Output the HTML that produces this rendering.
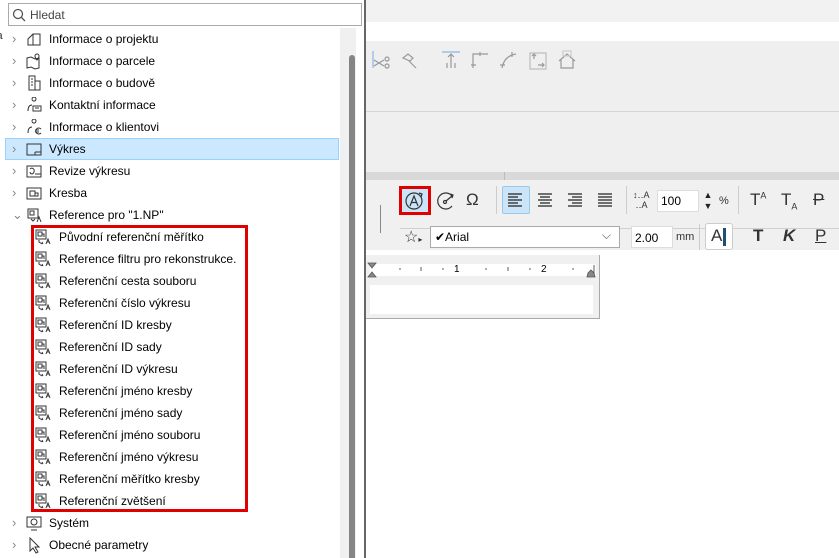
<!DOCTYPE html>
<html><head><meta charset="utf-8"><style>
*{margin:0;padding:0;box-sizing:border-box}
body{width:839px;height:558px;overflow:hidden;position:relative;background:#fff;font-family:"Liberation Sans",sans-serif;font-size:12px;color:#000}
.a{position:absolute}
.row{position:absolute;height:22px;line-height:22px;white-space:nowrap}
.chev{position:absolute;left:12px;top:0;color:#888;font-size:13px}
.ic{position:absolute;width:16px;height:16px;top:3px}
.ic svg{display:block}
.tb{position:absolute;color:#333;font-size:13px}
</style></head><body>
<div class="a" style="left:366px;top:0;width:473px;height:22px;background:#f2f2f2"></div>
<div class="a" style="left:366px;top:41px;width:473px;height:70px;background:#efefef"></div>
<div class="a" style="left:366px;top:111px;width:473px;height:1px;background:#d6d6d6"></div>
<div class="a" style="left:366px;top:112px;width:473px;height:60px;background:#efefef"></div>
<div class="a" style="left:366px;top:172px;width:473px;height:8px;background:#d9d9d9"></div>
<div class="a" style="left:504px;top:172px;width:1px;height:8px;background:#bbb"></div>
<div class="a" style="left:366px;top:180px;width:473px;height:70px;background:#f0f0f0"></div>
<div class="a" style="left:400px;top:228px;width:439px;height:1px;background:#d0d0d0"></div>
<div class="a" style="left:380px;top:205px;width:1px;height:28px;background:#888"></div>
<svg class="a" style="left:372px;top:50px" width="240" height="22" fill="none" stroke="#999" stroke-width="1.2">
<line x1="1" y1="1" x2="1" y2="18" stroke="#8bb4e8"/><path d="M2 10 L12 16 M2 16 L12 10"/><circle cx="15" cy="9" r="2"/><circle cx="15" cy="16" r="2"/>
<path d="M31 8 l5-4 5 4-3 3z M37 11 l7 7"/>
<line x1="70" y1="2" x2="88" y2="2" stroke="#8bb4e8"/><path d="M79 4 v10 M76 7 l3-3 3 3 M75 13v5 M79 14v4 M83 13v5"/>
<path d="M101 18 V4 H116 M108 2v4 M99 15h5"/>
<path d="M130 18 Q132 6 144 4 M140 2v5 M128 15h5"/>
<rect x="158" y="3" width="16" height="16" stroke="#bbb"/><path d="M162 9 v-5 M160 6l2-2 2 2 M166 15h6 M170 13l2 2-2 2"/>
<path d="M187 11 l8-7 8 7 M189 10v8 h12v-8"/><rect x="191" y="1" width="8" height="5" stroke="#ccc"/>
</svg>
<div class="a" style="left:399px;top:186px;width:32px;height:29px;border:3px solid #e00000;background:#cce4f7"></div>
<svg class="a" style="left:404px;top:190px" width="22" height="22" fill="none" stroke="#333" stroke-width="1.2"><circle cx="10" cy="11" r="8"/><path d="M6 16 l4-10 4 10 M7.5 12.5h5"/><path d="M15 3 l3 1 -1 3" /></svg>
<svg class="a" style="left:435px;top:190px" width="22" height="22" fill="none" stroke="#333" stroke-width="1.2"><path d="M17 6 A8 8 0 1 0 17 16"/><circle cx="10" cy="12" r="1.5"/><path d="M11 11 l6-5 M15 4l3 1-1 3"/></svg>
<div class="tb" style="left:466px;top:190px;font-size:17px">Ω</div>
<div class="a" style="left:496px;top:186px;width:1px;height:28px;background:#ccc"></div>
<div class="a" style="left:502px;top:186px;width:28px;height:28px;background:#cce4f7;border:1px solid #99c9ef;border-radius:2px"></div>
<svg class="a" style="left:508px;top:193px" width="110" height="14" stroke="#222" stroke-width="1.2">
<path d="M0 1h14M0 4h10M0 7h14M0 10h10M0 13h14"/>
<path d="M30 1h14M32 4h10M30 7h14M32 10h10M30 13h14"/>
<path d="M60 1h14M64 4h10M60 7h14M64 10h10M60 13h14"/>
<path d="M90 1h14M90 4h14M90 7h14M90 10h14M90 13h14"/>
</svg>
<div class="a" style="left:626px;top:186px;width:1px;height:28px;background:#ccc"></div>
<div class="tb" style="left:633px;top:190px;font-size:9px;line-height:10px">↕‥A<br>&nbsp;‥A</div>
<div class="a" style="left:657px;top:190px;width:42px;height:22px;background:#fff;border:1px solid #ddd;padding:3px 3px;font-size:12px">100</div>
<div class="a" style="left:701px;top:190px;width:14px;height:22px;font-size:9px;line-height:11px;text-align:center;color:#222">▲<br>▼</div>
<div class="tb" style="left:719px;top:195px;font-size:11px">%</div>
<div class="a" style="left:738px;top:186px;width:1px;height:28px;background:#ccc"></div>
<div class="tb" style="left:750px;top:190px;font-size:17px">T<sup style="font-size:9px">A</sup></div>
<div class="tb" style="left:781px;top:190px;font-size:17px">T<sub style="font-size:9px">A</sub></div>
<div class="tb" style="left:813px;top:190px;font-size:17px;text-decoration:line-through">P</div>
<div class="tb" style="left:404px;top:227px;font-size:16px">☆<span style="font-size:8px">▸</span></div>
<div class="a" style="left:430px;top:226px;width:190px;height:22px;background:#fff;border:1px solid #aaa;padding:3px 4px;font-size:12px">✔Arial<span style="position:absolute;right:8px;top:1px;color:#555">⌵</span></div>
<div class="a" style="left:631px;top:226px;width:42px;height:22px;background:#fff;border:1px solid #ddd;padding:4px 3px;font-size:12px">2.00</div>
<div class="tb" style="left:676px;top:231px;font-size:11px">mm</div>
<div class="a" style="left:699px;top:224px;width:1px;height:26px;background:#ccc"></div>
<div class="a" style="left:705px;top:223px;width:28px;height:27px;background:#fff;border:1px solid #ccc;border-radius:3px;font-size:17px;padding:2px 0 0 5px;color:#333">A<span style="position:absolute;right:6px;top:4px;width:3px;height:18px;background:#1e4f70"></span></div>
<div class="tb" style="left:753px;top:226px;font-size:17px;font-weight:bold">T</div>
<div class="tb" style="left:783px;top:226px;font-size:17px;font-weight:bold;font-style:italic">K</div>
<div class="tb" style="left:815px;top:226px;font-size:17px;text-decoration:underline">P</div>
<div class="a" style="left:366px;top:255px;width:234px;height:64px;background:#f0f0f0;border:1px solid #aaa;border-top:none;border-left:none"></div>
<div class="a" style="left:370px;top:264px;width:226px;height:12px;background:#fff"></div>
<div class="a" style="left:370px;top:285px;width:223px;height:29px;background:#fff"></div>
<div class="a" style="left:454px;top:264px;font-size:10px">1</div>
<div class="a" style="left:541px;top:264px;font-size:10px">2</div>
<svg class="a" style="left:366px;top:262px" width="234" height="20" fill="#888" stroke="#555" stroke-width=".8">
<path d="M2 1h8l-4 5z M2 15h8l-4-5z"/><path d="M221 15h8l-1-4-3-3-3 3z"/>
<g stroke="#333"><line x1="34" y1="6" x2="34" y2="8"/><line x1="55" y1="5" x2="55" y2="9"/><line x1="77" y1="6" x2="77" y2="8"/><line x1="120" y1="6" x2="120" y2="8"/><line x1="142" y1="5" x2="142" y2="9"/><line x1="164" y1="6" x2="164" y2="8"/><line x1="207" y1="6" x2="207" y2="8"/><line x1="228" y1="3" x2="228" y2="11"/></g>
</svg>
<div class="a" style="left:0;top:0;width:366px;height:558px;background:#fff;border-right:2px solid #666"></div>
<div class="a" style="left:-6px;top:30px;color:#333;font-size:11px">la</div>
<div class="a" style="left:8px;top:3px;width:354px;height:23px;border:1px solid #aaa;background:#fff"></div>
<svg class="a" style="left:12px;top:8px" width="14" height="14" fill="none" stroke="#555" stroke-width="1.3"><circle cx="6" cy="6" r="4.5"/><path d="M9.5 9.5l3.5 3.5"/></svg>
<div class="a" style="left:30px;top:8px;color:#444;font-size:12px">Hledat</div>
<div class="a" style="left:340px;top:28px;width:16px;height:530px;background:#f0f0f0"></div>
<div class="a" style="left:349px;top:55px;width:6px;height:503px;background:#858585;border-radius:3px 3px 0 0"></div>
<div class="a" style="left:5px;top:138px;width:334px;height:22px;background:#cce8ff;border:1px solid #99d1ff"></div>
<div class="a" style="left:31px;top:225px;width:217px;height:287px;border:3px solid #e00000"></div>

<div id="list"></div>
<script>
(function(){
var tops=[["Informace o projektu","M2 8l5-5h7v11H2z M7 3v11"],["Informace o parcele","M1 5l4-1 4 2 4-1v10l-4 1-4-2-4 1z M11 1a2 2 0 0 1 2 2c0 2-2 4-2 4s-2-2-2-4a2 2 0 0 1 2-2"],["Informace o budově","M3 1h6v14H3z M9 6h5v9H9z M5 4h2M5 7h2M5 10h2"],["Kontaktní informace","M6 2a2 2 0 1 1 0 .1 M2 14c0-5 2-6 4-6 M7 9h8v5H7z M9 11h4"],["Informace o klientovi","M6 2a2 2 0 1 1 0 .1 M2 14c0-5 2-6 4-6 M15 10a3 3 0 1 0 0 4 M9 11h4M9 13h4"],["Výkres","M1 3h14v11H1z M9 11h6 M9 11v3"],["Revize výkresu","M1 3h14v11H1z M9 11h6 M4 6c2-2 5 0 4 3s-4 2-4 0"],["Kresba","M1 3h14v11H1z M4 6h5v5H4z M9 8h3v3H9"],["Reference pro \"1.NP\"","M2 2h10v9H2z M4 4h4v4H4z M5 12l2 2 2-2 M11 15l2-5 2 5"]];
var kids=["Původní referenční měřítko","Reference filtru pro rekonstrukce.","Referenční cesta souboru","Referenční číslo výkresu","Referenční ID kresby","Referenční ID sady","Referenční ID výkresu","Referenční jméno kresby","Referenční jméno sady","Referenční jméno souboru","Referenční jméno výkresu","Referenční měřítko kresby","Referenční zvětšení"];
var refIc="M1 1h10v9H1z M3 3h4v4H3z M7 5h2v3 M4 11v2l3 2 M7 13l1 2 M11 15l2-5 2 5 M12 13h2";
var h="",y=28;
function icon(x,yy,d){return '<div class="ic" style="left:'+x+'px;top:'+(yy+3)+'px"><svg width="17" height="17" fill="none" stroke="#333" stroke-width="1"><path d="'+d+'"/></svg></div>';}
tops.forEach(function(t,i){h+='<div class="row" style="left:0;top:'+y+'px;width:340px"><span class="chev">'+(i==8?'⌄':'›')+'</span></div>'+icon(26,y,t[1])+'<div class="row" style="left:49px;top:'+y+'px">'+t[0]+'</div>';y+=22;});
kids.forEach(function(k){h+=icon(35,y,refIc)+'<div class="row" style="left:59px;top:'+y+'px">'+k+'</div>';y+=22;});
[["Systém","M1 2h14v10H1z M8 4a3 3 0 1 1 0 6a3 3 0 1 1 0-6 M5 15h6"],["Obecné parametry","M4 1v13l3-3 3 5 2-1-3-5h4z"]].forEach(function(t){h+='<div class="row" style="left:0;top:'+y+'px"><span class="chev">›</span></div>'+icon(26,y,t[1])+'<div class="row" style="left:49px;top:'+y+'px">'+t[0]+'</div>';y+=22;});
document.getElementById('list').innerHTML=h;
})();
</script>
</body></html>
